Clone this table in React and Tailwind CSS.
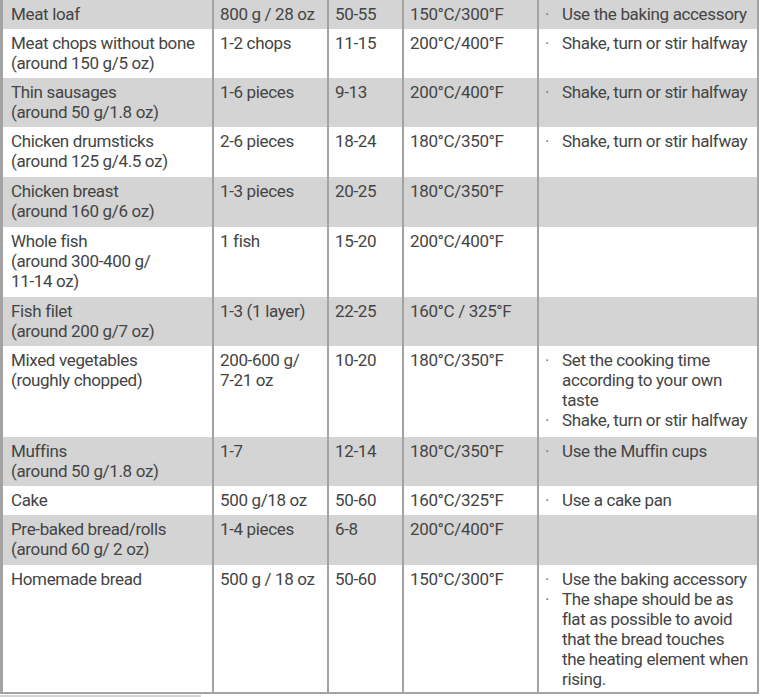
import React from "react";

const rows = [
  { h: "h-[29px]", food: ["Meat loaf"], amount: ["800 g / 28 oz"], time: "50-55", temp: "150°C/300°F", notes: [["Use the baking accessory"]] },
  { h: "h-[49px]", food: ["Meat chops without bone", "(around 150 g/5 oz)"], amount: ["1-2 chops"], time: "11-15", temp: "200°C/400°F", notes: [["Shake, turn or stir halfway"]] },
  { h: "h-[49px]", food: ["Thin sausages", "(around 50 g/1.8 oz)"], amount: ["1-6 pieces"], time: "9-13", temp: "200°C/400°F", notes: [["Shake, turn or stir halfway"]] },
  { h: "h-[50px]", food: ["Chicken drumsticks", "(around 125 g/4.5 oz)"], amount: ["2-6 pieces"], time: "18-24", temp: "180°C/350°F", notes: [["Shake, turn or stir halfway"]] },
  { h: "h-[50px]", food: ["Chicken breast", "(around 160 g/6 oz)"], amount: ["1-3 pieces"], time: "20-25", temp: "180°C/350°F", notes: [] },
  { h: "h-[70px]", food: ["Whole fish", "(around 300-400 g/", "11-14 oz)"], amount: ["1 fish"], time: "15-20", temp: "200°C/400°F", notes: [] },
  { h: "h-[49px]", food: ["Fish filet", "(around 200 g/7 oz)"], amount: ["1-3 (1 layer)"], time: "22-25", temp: "160°C / 325°F", notes: [] },
  {
    h: "h-[91px]",
    food: ["Mixed vegetables", "(roughly chopped)"],
    amount: ["200-600 g/", "7-21 oz"],
    time: "10-20",
    temp: "180°C/350°F",
    notes: [["Set the cooking time", "according to your own", "taste"], ["Shake, turn or stir halfway"]],
  },
  { h: "h-[49px]", food: ["Muffins", "(around 50 g/1.8 oz)"], amount: ["1-7"], time: "12-14", temp: "180°C/350°F", notes: [["Use the Muffin cups"]] },
  { h: "h-[29px]", food: ["Cake"], amount: ["500 g/18 oz"], time: "50-60", temp: "160°C/325°F", notes: [["Use a cake pan"]] },
  { h: "h-[50px]", food: ["Pre-baked bread/rolls", "(around 60 g/ 2 oz)"], amount: ["1-4 pieces"], time: "6-8", temp: "200°C/400°F", notes: [] },
  {
    h: "h-[127px]",
    food: ["Homemade bread"],
    amount: ["500 g / 18 oz"],
    time: "50-60",
    temp: "150°C/300°F",
    notes: [
      ["Use the baking accessory"],
      ["The shape should be as", "flat as possible to avoid", "that the bread touches", "the heating element when", "rising."],
    ],
  },
];

const Lines = ({ lines }) =>
  lines.map((l, i) => (
    <div key={i} className="whitespace-nowrap">
      {l}
    </div>
  ));

export default function App() {
  return (
    <div
      className="bg-white text-[#444] text-[17px] leading-[20px] tracking-[-0.35px]"
      style={{ fontFamily: "Roboto, 'Liberation Sans', sans-serif" }}
    >
      <div className="w-[759px] border-l-[3px] border-r-2 border-b-2 border-[#a3a3a3]">
        {rows.map((r, idx) => (
          <div
            key={idx}
            className={`grid grid-cols-[211px_115px_75px_135px_1fr] ${r.h} ${
              idx % 2 === 0 ? "bg-[#d4d4d4]" : "bg-white"
            }`}
          >
            <div className="border-r-2 border-[#a3a3a3] pl-[8px] pt-[4px]">
              <Lines lines={r.food} />
            </div>
            <div className="border-r-2 border-[#a3a3a3] pl-[6px] pt-[4px]">
              <Lines lines={r.amount} />
            </div>
            <div className="border-r-2 border-[#a3a3a3] pl-[6px] pt-[4px]">{r.time}</div>
            <div className="border-r-2 border-[#a3a3a3] pl-[6px] pt-[4px]">{r.temp}</div>
            <div className="pl-[6px] pt-[4px]">
              {r.notes.map((n, i) => (
                <div key={i} className="flex">
                  <span className="w-[17px] shrink-0 text-[#777]">·</span>
                  <div>
                    <Lines lines={n} />
                  </div>
                </div>
              ))}
            </div>
          </div>
        ))}
      </div>
      <div className="w-[201px] h-[3px] mt-px bg-[#d4d4d4]" />
    </div>
  );
}
